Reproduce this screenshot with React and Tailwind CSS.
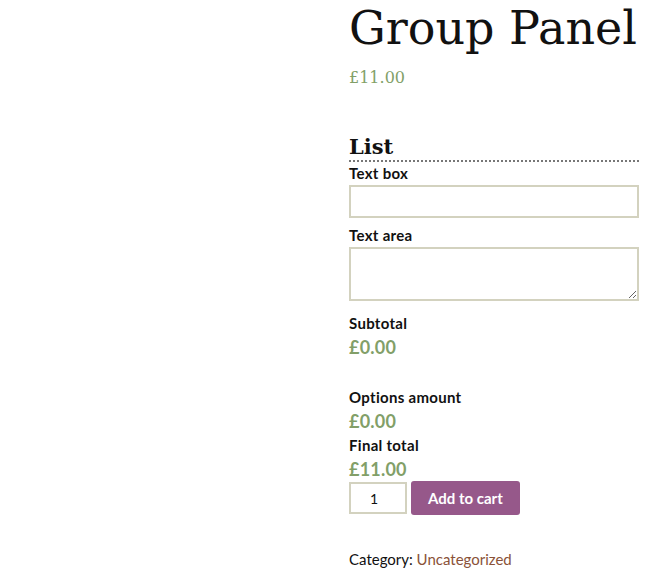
import React from "react";

const serif = { fontFamily: '"DejaVu Serif", "Liberation Serif", serif' };

function Field({ label, children }) {
  return (
    <div className="flex flex-col">
      <label className="text-[15px] font-bold leading-[20px] tracking-[0.3px] text-[#111]">{label}</label>
      {children}
    </div>
  );
}

function Amount({ label, value }) {
  return (
    <div className="flex flex-col">
      <span className="text-[15px] font-bold leading-[20px] tracking-[0.3px] text-[#111]">{label}</span>
      <span className="mt-[2px] text-[18px] font-bold leading-[24px] tracking-[0.2px] text-[#829f68]">{value}</span>
    </div>
  );
}

export default function App() {
  return (
    <div
      className="flex w-[649px] h-[576px] bg-white overflow-hidden"
      style={{ fontFamily: '"Lato", "Open Sans", sans-serif' }}
    >
      <div className="w-[349px] shrink-0" />
      <div className="w-[290px] flex flex-col">
        <h1
          className="text-[46px] leading-[56px] text-[#111] font-normal whitespace-nowrap"
          style={serif}
        >
          Group Panel
        </h1>
        <p className="mt-[10px] text-[16px] leading-[24px] text-[#829f68]" style={serif}>
          £11.00
        </p>

        <h3
          className="mt-[44px] text-[21px] font-bold leading-[26px] text-[#111] border-b-2 border-dotted border-[#777]"
          style={serif}
        >
          List
        </h3>

        <div className="mt-[1px] flex flex-col gap-[7px]">
          <Field label="Text box">
            <input
              type="text"
              className="mt-[2px] h-[33px] w-full border-2 border-[#d3d2bf] outline-none"
            />
          </Field>
          <Field label="Text area">
            <textarea className="mt-[2px] h-[54px] w-full border-2 border-[#d3d2bf] outline-none resize-y" />
          </Field>
        </div>

        <div className="mt-[12px]">
          <Amount label="Subtotal" value="£0.00" />
        </div>
        <div className="mt-[28px] flex flex-col gap-[2px]">
          <Amount label="Options amount" value="£0.00" />
          <Amount label="Final total" value="£11.00" />
        </div>

        <div className="flex items-center gap-[4px]">
          <input
            type="number"
            defaultValue="1"
            className="h-[32px] w-[58px] border-2 border-[#d3d2bf] pl-[19px] text-[14px] text-[#111] outline-none [appearance:textfield]"
          />
          <button className="h-[34px] px-[17px] rounded-[3px] bg-[#96588a] text-white text-[15px] font-bold">
            Add to cart
          </button>
        </div>

        <p className="mt-[34px] text-[15px] leading-[20px] text-[#111]">
          Category: <a className="text-[#8a5238]">Uncategorized</a>
        </p>
      </div>
    </div>
  );
}
